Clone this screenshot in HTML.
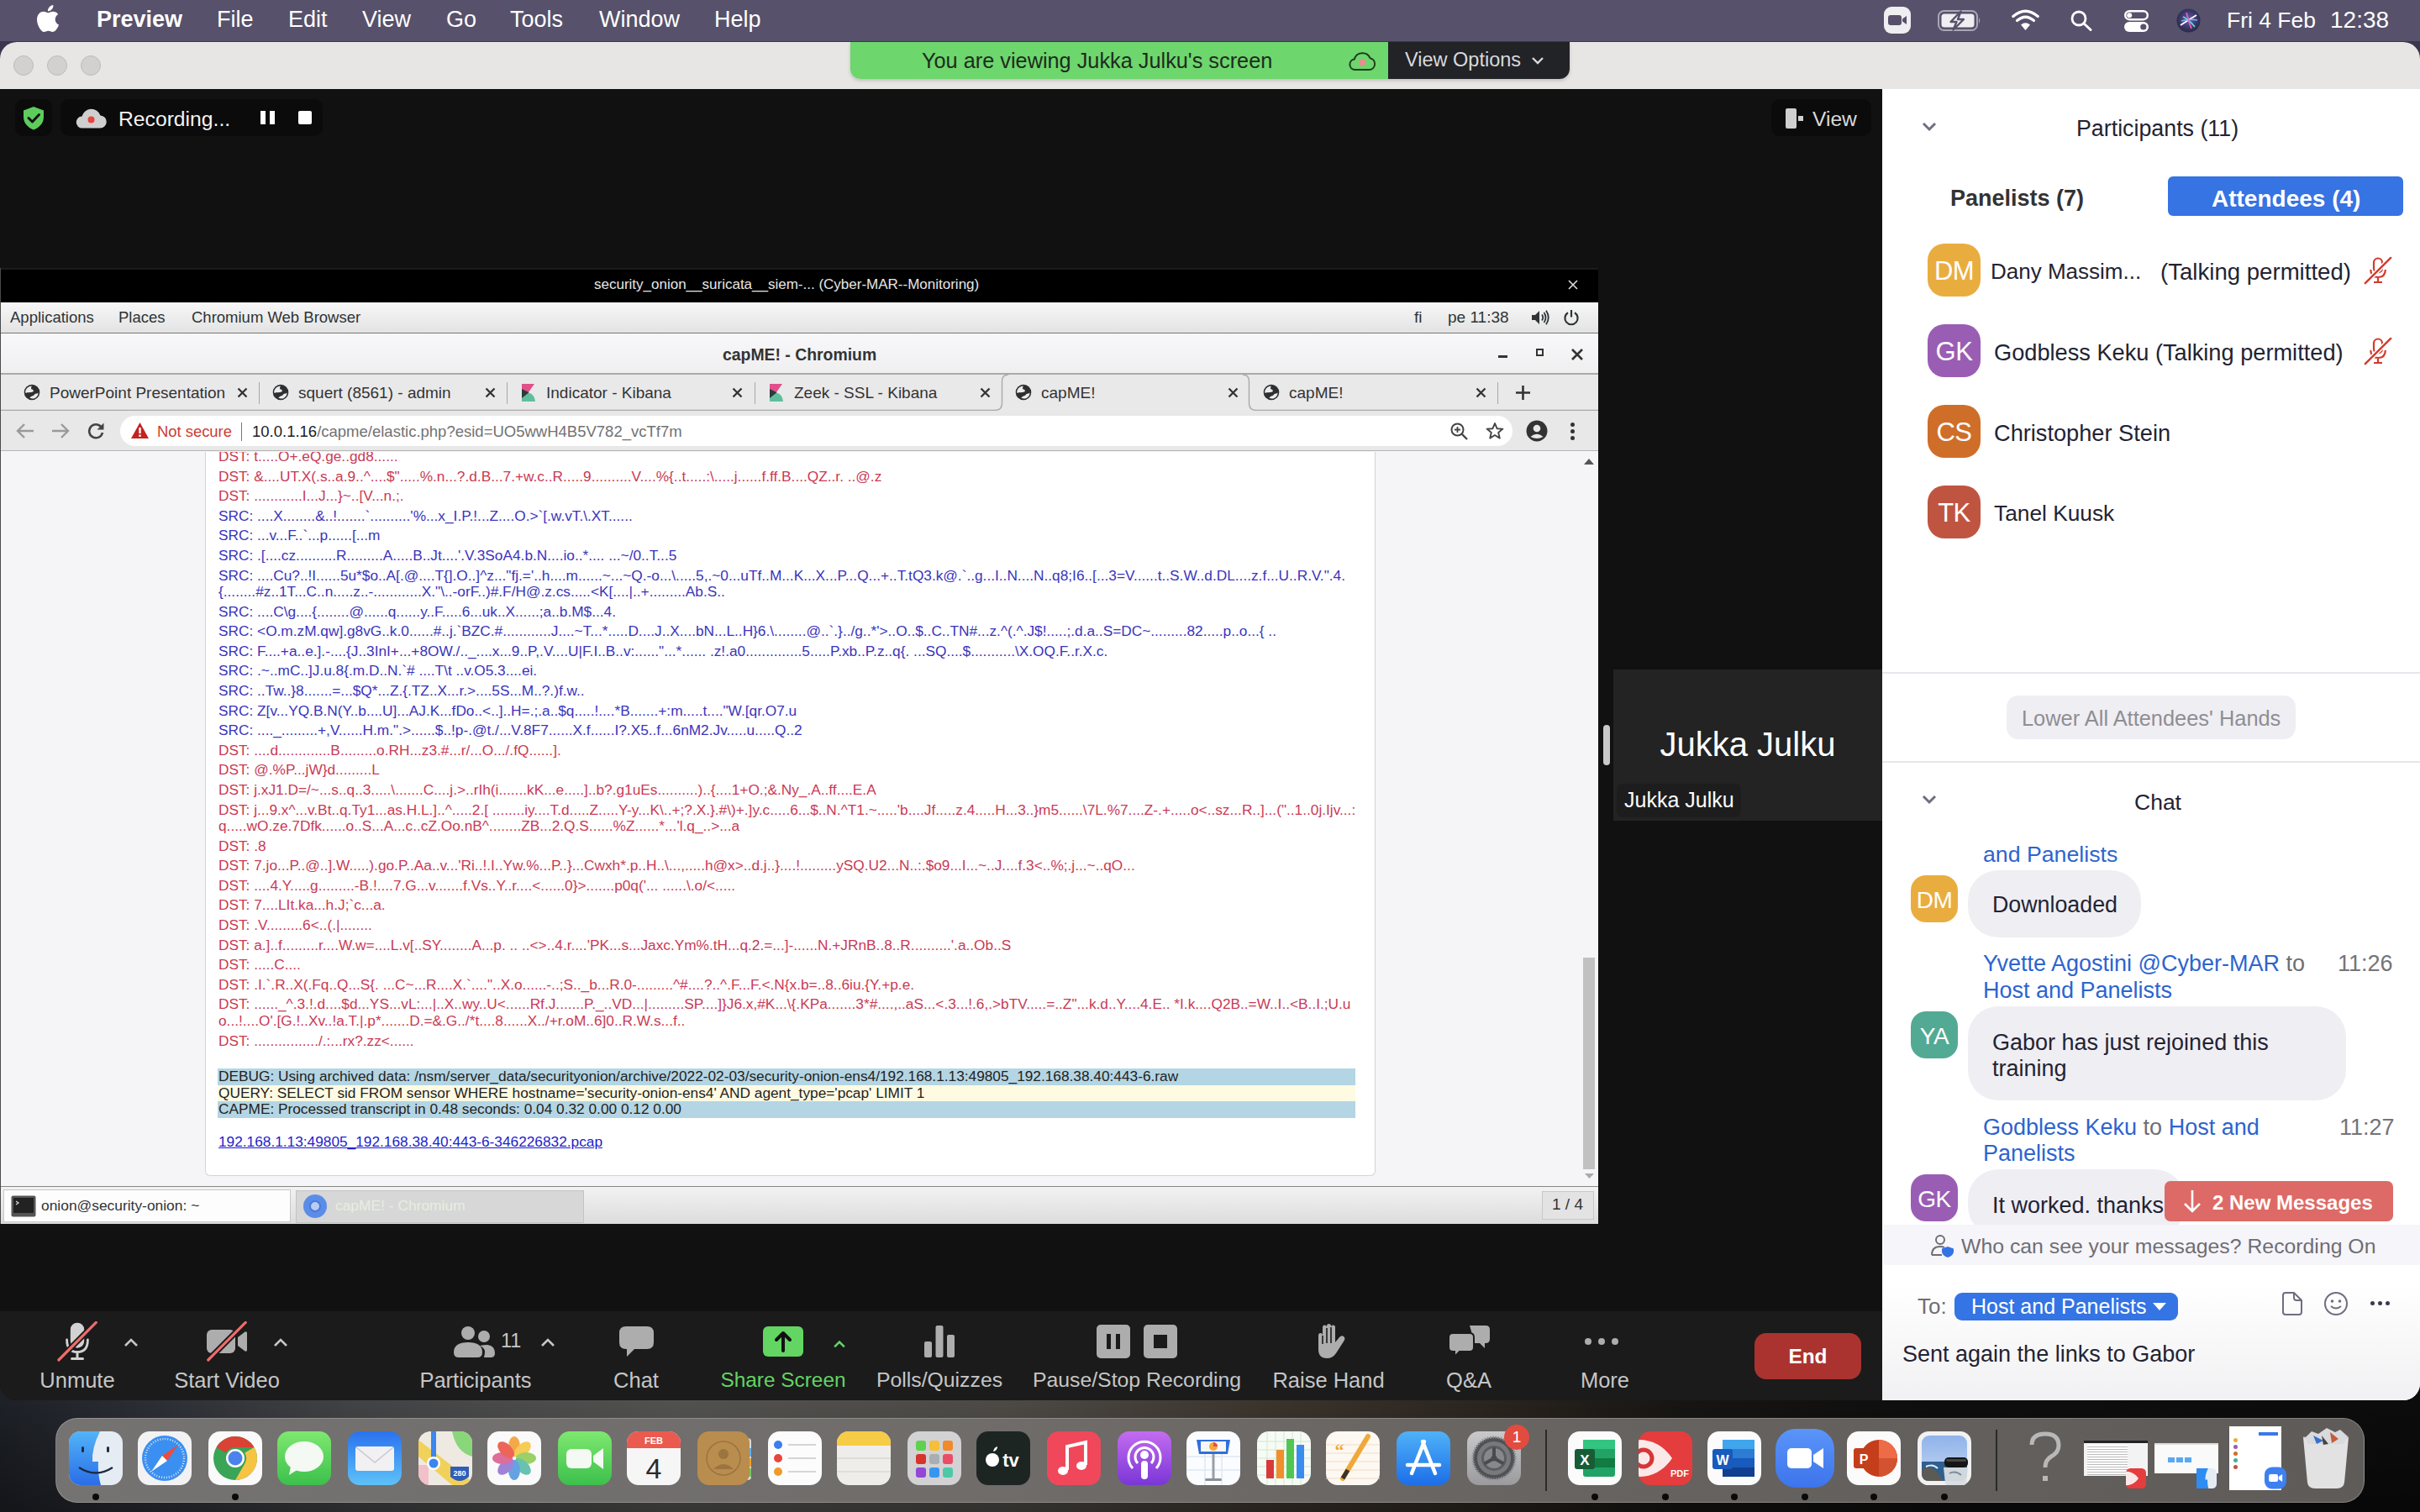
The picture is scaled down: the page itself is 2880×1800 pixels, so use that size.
<!DOCTYPE html>
<html><head><meta charset="utf-8">
<style>
*{margin:0;padding:0;box-sizing:border-box}
html,body{width:2880px;height:1800px;overflow:hidden}
body{position:relative;background:#141414;font-family:"Liberation Sans",sans-serif;color:#000}
.a{position:absolute}
.nw{white-space:nowrap}
/* wallpaper */
#wall{left:0;top:0;width:2880px;height:1800px;background:
linear-gradient(180deg,rgba(0,0,0,0) 0,rgba(0,0,0,0) 1667px,rgba(0,0,0,.0) 1667px,rgba(0,0,0,.35) 1800px),
linear-gradient(180deg,#3a3650 0,#3a3650 110px,rgba(0,0,0,0) 110px),linear-gradient(90deg,#1d2026 0px,#2b2e35 180px,#424345 420px,#525250 800px,#4d4a46 1200px,#3c352e 1500px,#2c2620 1750px,#171513 2000px,#0e0e0e 2300px,#0c0c0c 2880px)}
/* menubar */
#menubar{left:0;top:0;width:2880px;height:49px;background:#57516b;color:#fff;font-size:27px}
#menubar span{position:absolute;top:8px}
/* zoom window */
#zwin{left:0;top:50px;width:2880px;height:1617px;border-radius:20px;overflow:hidden;background:#111}
#ztitle{left:0;top:0;width:2880px;height:56px;background:#e8e6e5}
.tl{position:absolute;top:16px;width:24px;height:24px;border-radius:50%;background:#d3d1cf;border:1px solid #bdbbb9}
#stage{left:0;top:56px;width:2240px;height:1455px;background:#111111}
#toolbar{left:0;top:1511px;width:2240px;height:106px;background:#1b1b1b}
#panel{left:2240px;top:56px;width:640px;height:1561px;background:#fff}
#txt div{font-size:17.27px;line-height:19.5px;margin-bottom:4.1px;white-space:nowrap}
#txt .d{color:#c93a55}
#txt .s{color:#3a34bc}
.dbg{font-size:17.27px;line-height:19.5px;color:#222}
.tabt2{top:138px;font-size:19px;color:#333}
.pt{color:#232333;line-height:normal;margin-top:2px}
.bl{color:#2d64cf}
.av{width:63px;height:63px;border-radius:20px;color:#fff;font-size:31px;line-height:66px;text-align:center;letter-spacing:-.5px}
.av2{width:56px;height:56px;border-radius:18px;color:#fff;font-size:28px;line-height:59px;text-align:center;letter-spacing:-.5px}
.bub{background:#efeef3;border-radius:36px}
.tb{top:1629px;text-align:center;font-size:25.5px;color:#c6c6c6}
.di{top:1704px;width:64px;height:64px}
.dot{top:1778px;width:8px;height:8px;border-radius:50%;background:#0a0a0a}
.tabx2{top:136px;font-size:19px;color:#333;font-weight:bold}
</style></head>
<body>
<div id="wall" class="a"></div>

<div id="menubar" class="a">
  <svg class="a" style="left:44px;top:6px" width="26" height="32" viewBox="0 0 814 1000"><path fill="#fff" d="M788.1 340.9c-5.8 4.5-108.2 62.2-108.2 190.5 0 148.4 130.3 200.9 134.2 202.2-.6 3.2-20.7 71.9-68.7 141.9-42.8 61.6-87.5 123.1-155.5 123.1s-85.5-39.5-164-39.5c-76.5 0-103.7 40.8-165.9 40.8s-105.6-57-155.5-127C46.7 790.7 0 663 0 541.8c0-194.4 126.4-297.5 250.8-297.5 66.1 0 121.2 43.4 162.7 43.4 39.5 0 101.1-46 176.3-46 28.5 0 130.9 2.6 198.3 99.2zm-234-181.5c31.1-36.9 53.1-88.1 53.1-139.3 0-7.1-.6-14.3-1.9-20.1-50.6 1.9-110.8 33.7-147.1 75.8-28.5 32.4-55.1 83.6-55.1 135.5 0 7.8 1.3 15.6 1.9 18.1 3.2.6 8.4 1.3 13.6 1.3 45.4 0 102.5-30.4 135.5-71.3z"/></svg>
  <span style="left:115px;font-weight:bold;font-size:27px">Preview</span>
  <span style="left:258px">File</span>
  <span style="left:343px">Edit</span>
  <span style="left:431px">View</span>
  <span style="left:531px">Go</span>
  <span style="left:607px">Tools</span>
  <span style="left:713px">Window</span>
  <span style="left:850px">Help</span>
  <svg class="a" style="left:2242px;top:8px" width="32" height="32" viewBox="0 0 32 32"><rect x="0" y="0" width="32" height="32" rx="9" fill="#efeef0"/><rect x="5" y="10" width="16" height="12" rx="3" fill="#57516b"/><path d="M22 14.5 L27 11 V21 L22 17.5Z" fill="#57516b"/></svg>
  <svg class="a" style="left:2306px;top:12px" width="52" height="25" viewBox="0 0 52 25"><rect x="1" y="1" width="46" height="23" rx="6.5" fill="none" stroke="#aaa6b6" stroke-width="2"/><rect x="4.5" y="4.5" width="39" height="16" rx="3.5" fill="#efeef0"/><path d="M49 9 Q51.5 12.5 49 16Z" fill="#aaa6b6"/><path d="M27.5 1.5 L15.5 14 H22.5 L18.5 23.5 L31 11 H24Z" fill="#efeef0" stroke="#57516b" stroke-width="2.4" stroke-linejoin="round"/></svg>
  <svg class="a" style="left:2394px;top:11px" width="33" height="25" viewBox="0 0 33 25"><path d="M16.5 25 L11 18.5 Q16.5 14 22 18.5Z" fill="#fff"/><path d="M6.5 13.5 Q16.5 5 26.5 13.5" stroke="#fff" stroke-width="3.2" fill="none" stroke-linecap="round"/><path d="M1.8 8.5 Q16.5 -4 31.2 8.5" stroke="#fff" stroke-width="3.2" fill="none" stroke-linecap="round"/></svg>
  <svg class="a" style="left:2464px;top:12px" width="26" height="25" viewBox="0 0 26 25"><circle cx="10" cy="10" r="8" stroke="#fff" stroke-width="2.8" fill="none"/><path d="M16 16 L24 23.5" stroke="#fff" stroke-width="3" stroke-linecap="round"/></svg>
  <svg class="a" style="left:2528px;top:12px" width="29" height="26" viewBox="0 0 29 26"><rect x="1.2" y="1.2" width="26.6" height="10" rx="5" fill="none" stroke="#fff" stroke-width="2.4"/><circle cx="6.2" cy="6.2" r="3" fill="#fff"/><rect x="0" y="14" width="29" height="12" rx="6" fill="#fff"/><circle cx="22.8" cy="20" r="3.6" fill="#57516b"/></svg>
  <svg class="a" style="left:2590px;top:10px" width="29" height="29" viewBox="0 0 29 29"><defs><radialGradient id="sg" cx=".5" cy=".45" r=".55"><stop offset="0" stop-color="#6a5fa8"/><stop offset=".6" stop-color="#3b3a6e"/><stop offset="1" stop-color="#2a2a44"/></radialGradient></defs><circle cx="14.5" cy="14.5" r="14" fill="url(#sg)"/><path d="M5 20 Q14 14 24 8" stroke="#fff" stroke-width="2" fill="none"/><path d="M8 10 Q15 13 22 22" stroke="#5ee0d0" stroke-width="1.8" fill="none"/><path d="M12 5 Q14 14 18 24" stroke="#e85ac0" stroke-width="1.8" fill="none"/><path d="M6 15 Q15 12 25 14" stroke="#7ab0ff" stroke-width="1.5" fill="none"/></svg>
  <span style="left:2650px;font-size:26.5px;top:9px">Fri 4 Feb</span>
  <span style="left:2773px;font-size:28px">12:38</span>
</div>

<div id="zwin" class="a">
  <div id="ztitle" class="a">
    <div class="tl" style="left:16px"></div>
    <div class="tl" style="left:56px"></div>
    <div class="tl" style="left:96px"></div>
    <div class="a" style="left:1012px;top:0;width:856px;height:44px;border-radius:0 0 12px 12px;overflow:hidden;box-shadow:0 2px 4px rgba(0,0,0,.18)">
      <div class="a" style="left:0;top:0;width:640px;height:44px;background:#6dd66c"></div>
      <div class="a" style="left:640px;top:0;width:216px;height:44px;background:#222326"></div>
      <div class="a nw" style="left:85px;top:8px;font-size:25.3px;color:#1f2a1f">You are viewing Jukka Julku's screen</div>
      <svg class="a" style="left:592px;top:10px" width="34" height="26" viewBox="0 0 34 26"><path d="M8 23 H26 A7 7 0 0 0 26.5 9.2 A10 10 0 0 0 7.8 10.5 A6.3 6.3 0 0 0 8 23Z" fill="none" stroke="#1f3b1f" stroke-width="2"/><circle cx="17" cy="14.5" r="4" fill="#e98c94"/></svg>
      <div class="a nw" style="left:660px;top:8px;font-size:23.5px;color:#d9d9dc">View Options</div>
      <svg class="a" style="left:810px;top:16px" width="16" height="12" viewBox="0 0 16 12"><path d="M2 3 L8 9 L14 3" stroke="#d9d9dc" stroke-width="2.4" fill="none"/></svg>
    </div>
  </div>
  <div id="stage" class="a">
    <div class="a" style="left:18px;top:12px;width:44px;height:44px;border-radius:10px;background:#0b0b0b"></div>
    <svg class="a" style="left:27px;top:20px" width="26" height="29" viewBox="0 0 26 29"><path d="M13 1 L25 5.5 V13 C25 21 19.5 26 13 28.5 C6.5 26 1 21 1 13 V5.5Z" fill="#5dcc5d"/><path d="M7 14.5 L11.5 19 L19.5 10.5" stroke="#111" stroke-width="3" fill="none" stroke-linecap="round" stroke-linejoin="round"/></svg>
    <div class="a" style="left:72px;top:12px;width:312px;height:44px;border-radius:10px;background:#0b0b0b"></div>
    <svg class="a" style="left:90px;top:21px" width="37" height="26" viewBox="0 0 37 26"><path d="M8 25.5 H29 A7.5 7.5 0 0 0 29.5 10.5 A11.5 11.5 0 0 0 7.5 11.5 A7 7 0 0 0 8 25.5Z" fill="#cfcfcf"/><circle cx="18.5" cy="15.5" r="4" fill="#e8453c"/></svg>
    <div class="a nw" style="left:141px;top:22px;font-size:24.7px;color:#f4f4f4">Recording...</div>
    <div class="a" style="left:310px;top:26px;width:6px;height:16px;background:#fff"></div>
    <div class="a" style="left:321px;top:26px;width:6px;height:16px;background:#fff"></div>
    <div class="a" style="left:355px;top:26px;width:16px;height:16px;border-radius:2px;background:#fff"></div>
    <div class="a" style="left:2108px;top:12px;width:119px;height:44px;border-radius:10px;background:#0b0b0b"></div>
    <svg class="a" style="left:2125px;top:23px" width="24" height="24" viewBox="0 0 24 24"><rect x="0" y="0" width="13" height="24" rx="2" fill="#cfcfcf"/><rect x="15" y="9" width="6" height="6" fill="#cfcfcf"/></svg>
    <div class="a nw" style="left:2157px;top:22px;font-size:24.6px;color:#dadada">View</div>
  </div>
  <div id="toolbar" class="a"></div>
  <div id="panel" class="a"></div>
</div>

<svg width="0" height="0" style="position:absolute">
  <defs>
    <symbol id="globe" viewBox="0 0 20 20"><circle cx="10" cy="10" r="9.3" fill="#2e2f31"/><path d="M2.6 7.5 Q4.5 3 9.8 2.4 Q8.6 4.6 9.4 6.2 Q12.6 6.9 11.6 9.2 Q8.6 10.6 4.2 10.2 Q2.9 11.2 2.2 10.2 Q2.1 8.8 2.6 7.5Z" fill="#ececec"/><path d="M7.2 16.6 Q9.5 14.2 12.2 13.8 Q12.8 12.4 14.2 11.8 Q16.3 11.8 17.6 10.6 Q17.4 15.6 12.5 17.4 Q9.6 17.9 7.2 16.6Z" fill="#ececec"/></symbol>
    <symbol id="kib" viewBox="0 0 16 21"><path d="M0 0 H15 L8 10 L0 10Z" fill="#e0508a"/><path d="M0 21 H16 Q15 12 8 10.5 L0 15Z" fill="#5fbf9c"/><path d="M0 6 L8.5 10.2 L0 17Z" fill="#2f3a3a"/></symbol>
  </defs>
</svg>
<div class="a" id="lx" style="left:0;top:319px;width:1902px;height:1138px;overflow:hidden;background:#f5f4f7">
  <!-- top black bar -->
  <div class="a" style="left:0;top:0;width:1902px;height:41px;background:#000;border-top:2px solid #1c1c1c"></div>
  <div class="a nw" style="left:707px;top:10px;font-size:17px;color:#e6e6e6">security_onion__suricata__siem-... (Cyber-MAR--Monitoring)</div>
  <svg class="a" style="left:1864px;top:12px" width="16" height="16" viewBox="0 0 16 16"><path d="M3 3 L13 13 M13 3 L3 13" stroke="#ddd" stroke-width="1.6"/></svg>
  <!-- gnome panel -->
  <div class="a" style="left:0;top:41px;width:1902px;height:37px;background:linear-gradient(#f7f7f7,#e3e3e3);border-bottom:1px solid #777"></div>
  <div class="a nw" style="left:12px;top:48px;font-size:18.5px;color:#2e3436">Applications</div>
  <div class="a nw" style="left:141px;top:48px;font-size:18.5px;color:#2e3436">Places</div>
  <div class="a nw" style="left:228px;top:48px;font-size:18.5px;color:#2e3436">Chromium Web Browser</div>
  <div class="a nw" style="left:1683px;top:48px;font-size:19px;color:#2e3436">fi</div>
  <div class="a nw" style="left:1723px;top:48px;font-size:19px;color:#2e3436">pe 11:38</div>
  <svg class="a" style="left:1822px;top:49px" width="22" height="20" viewBox="0 0 22 20"><path d="M1 7 H5 L10 2 V18 L5 13 H1Z" fill="#2e3436"/><path d="M13 6.5 Q15.5 10 13 13.5 M15.5 4 Q19.5 10 15.5 16 M18 1.8 Q23.5 10 18 18.2" stroke="#2e3436" stroke-width="1.8" fill="none"/></svg>
  <svg class="a" style="left:1860px;top:49px" width="20" height="20" viewBox="0 0 20 20"><path d="M6 4.2 A7.6 7.6 0 1 0 14 4.2" stroke="#2e3436" stroke-width="2.2" fill="none"/><path d="M10 1 V9.5" stroke="#2e3436" stroke-width="2.2"/></svg>
  <!-- chromium title -->
  <div class="a" style="left:0;top:78px;width:1902px;height:48px;background:linear-gradient(#f8f7f9,#efeff0)"></div>
  <div class="a nw" style="left:860px;top:92px;font-size:19.4px;font-weight:bold;color:#333">capME! - Chromium</div>
  <div class="a" style="left:1783px;top:104px;width:11px;height:3px;background:#333"></div>
  <div class="a" style="left:1828px;top:96px;width:9px;height:9px;border:2.5px solid #333"></div>
  <svg class="a" style="left:1869px;top:95px" width="16" height="16" viewBox="0 0 16 16"><path d="M2 2 L14 14 M14 2 L2 14" stroke="#333" stroke-width="2.6"/></svg>
  <!-- tab strip -->
  <div class="a" style="left:0;top:125px;width:1902px;height:45px;background:#e9e9ea;border-top:2px solid #aaaaaa"></div>
  <svg class="a" style="left:0;top:126px" width="1902" height="45" viewBox="0 0 1902 45"><path d="M0 43.5 H1184 Q1192.5 43.5 1192.5 35 V9 Q1192.5 1 1200 1" stroke="#a9a9a9" stroke-width="1.4" fill="none"/><path d="M1479 1 Q1486.5 1 1486.5 9 V35 Q1486.5 43.5 1495 43.5 H1902" stroke="#a9a9a9" stroke-width="1.4" fill="none"/></svg>
  <svg class="a" style="left:28px;top:138px" width="20" height="20"><use href="#globe"/></svg>
  <div class="a nw tabt2" style="left:59px">PowerPoint Presentation</div>
  <svg class="a" style="left:282px;top:142px" width="13" height="13" viewBox="0 0 13 13"><path d="M1.5 1.5 L11.5 11.5 M11.5 1.5 L1.5 11.5" stroke="#333" stroke-width="2.3"/></svg>
  <div class="a" style="left:308px;top:136px;width:1px;height:26px;background:#a8a8a8"></div>
  <svg class="a" style="left:324px;top:138px" width="20" height="20"><use href="#globe"/></svg>
  <div class="a nw tabt2" style="left:355px">squert (8561) - admin</div>
  <svg class="a" style="left:577px;top:142px" width="13" height="13" viewBox="0 0 13 13"><path d="M1.5 1.5 L11.5 11.5 M11.5 1.5 L1.5 11.5" stroke="#333" stroke-width="2.3"/></svg>
  <div class="a" style="left:603px;top:136px;width:1px;height:26px;background:#a8a8a8"></div>
  <svg class="a" style="left:621px;top:138px" width="16" height="21"><use href="#kib"/></svg>
  <div class="a nw tabt2" style="left:650px">Indicator - Kibana</div>
  <svg class="a" style="left:871px;top:142px" width="13" height="13" viewBox="0 0 13 13"><path d="M1.5 1.5 L11.5 11.5 M11.5 1.5 L1.5 11.5" stroke="#333" stroke-width="2.3"/></svg>
  <div class="a" style="left:898px;top:136px;width:1px;height:26px;background:#a8a8a8"></div>
  <svg class="a" style="left:916px;top:138px" width="16" height="21"><use href="#kib"/></svg>
  <div class="a nw tabt2" style="left:945px">Zeek - SSL - Kibana</div>
  <svg class="a" style="left:1166px;top:142px" width="13" height="13" viewBox="0 0 13 13"><path d="M1.5 1.5 L11.5 11.5 M11.5 1.5 L1.5 11.5" stroke="#333" stroke-width="2.3"/></svg>
  <svg class="a" style="left:1208px;top:138px" width="20" height="20"><use href="#globe"/></svg>
  <div class="a nw tabt2" style="left:1239px">capME!</div>
  <svg class="a" style="left:1461px;top:142px" width="13" height="13" viewBox="0 0 13 13"><path d="M1.5 1.5 L11.5 11.5 M11.5 1.5 L1.5 11.5" stroke="#333" stroke-width="2.3"/></svg>
  <svg class="a" style="left:1503px;top:138px" width="20" height="20"><use href="#globe"/></svg>
  <div class="a nw tabt2" style="left:1534px">capME!</div>
  <svg class="a" style="left:1756px;top:142px" width="13" height="13" viewBox="0 0 13 13"><path d="M1.5 1.5 L11.5 11.5 M11.5 1.5 L1.5 11.5" stroke="#333" stroke-width="2.3"/></svg>
  <div class="a" style="left:1782px;top:136px;width:1px;height:26px;background:#a8a8a8"></div>
  <svg class="a" style="left:1804px;top:140px" width="17" height="17" viewBox="0 0 17 17"><path d="M8.5 0 V17 M0 8.5 H17" stroke="#333" stroke-width="2.6"/></svg>
  <!-- toolbar -->
  <div class="a" style="left:0;top:170px;width:1902px;height:48px;background:#e8e8e8;border-bottom:1px solid #b5b5b5"></div>
  <svg class="a" style="left:19px;top:184px" width="22" height="20" viewBox="0 0 22 20"><path d="M21 10 H3 M10 2 L2 10 L10 18" stroke="#9a9a9a" stroke-width="2.4" fill="none"/></svg>
  <svg class="a" style="left:61px;top:184px" width="22" height="20" viewBox="0 0 22 20"><path d="M1 10 H19 M12 2 L20 10 L12 18" stroke="#9a9a9a" stroke-width="2.4" fill="none"/></svg>
  <svg class="a" style="left:103px;top:183px" width="22" height="22" viewBox="0 0 22 22"><path d="M18.5 8 A8 8 0 1 0 19 13" stroke="#444" stroke-width="2.6" fill="none"/><path d="M20.5 1.5 V9.5 H12.5Z" fill="#444"/></svg>
  <div class="a" style="left:143px;top:176px;width:1657px;height:36px;border-radius:18px;background:#fff"></div>
  <svg class="a" style="left:156px;top:184px" width="21" height="19" viewBox="0 0 21 19"><path d="M10.5 0 L21 19 H0Z" fill="#c5221f"/><rect x="9.3" y="6" width="2.4" height="7" fill="#fff"/><rect x="9.3" y="14.5" width="2.4" height="2.4" fill="#fff"/></svg>
  <div class="a nw" style="left:187px;top:184px;font-size:18.4px;color:#cc3b34">Not secure</div>
  <div class="a" style="left:287px;top:184px;width:1px;height:22px;background:#777"></div>
  <div class="a nw" style="left:300px;top:184px;font-size:18.5px;color:#727272"><span style="color:#202124">10.0.1.16</span>/capme/elastic.php?esid=UO5wwH4B5V782_vcTf7m</div>
  <svg class="a" style="left:1726px;top:184px" width="22" height="22" viewBox="0 0 22 22"><circle cx="8.5" cy="8.5" r="7" stroke="#444" stroke-width="2" fill="none"/><path d="M13.5 13.5 L20 20" stroke="#444" stroke-width="2.4"/><path d="M8.5 5 V12 M5 8.5 H12" stroke="#444" stroke-width="1.8"/></svg>
  <svg class="a" style="left:1768px;top:183px" width="22" height="22" viewBox="0 0 22 22"><path d="M11 2 L13.6 8.2 L20.4 8.6 L15.2 13 L16.8 19.6 L11 16 L5.2 19.6 L6.8 13 L1.6 8.6 L8.4 8.2Z" stroke="#444" stroke-width="1.9" fill="none" stroke-linejoin="round"/></svg>
  <svg class="a" style="left:1816px;top:181px" width="26" height="26" viewBox="0 0 26 26"><circle cx="13" cy="13" r="12.5" fill="#333"/><circle cx="13" cy="10" r="4.3" fill="#e8e8e8"/><path d="M5.5 20 Q13 13.5 20.5 20 Q13 24 5.5 20Z" fill="#e8e8e8"/></svg>
  <div class="a" style="left:1869px;top:184px;width:5px;height:5px;border-radius:50%;background:#333"></div>
  <div class="a" style="left:1869px;top:192px;width:5px;height:5px;border-radius:50%;background:#333"></div>
  <div class="a" style="left:1869px;top:200px;width:5px;height:5px;border-radius:50%;background:#333"></div>
  <!-- content -->
  <div class="a" style="left:244px;top:219px;width:1393px;height:862px;background:#fff;border:1px solid #d4d4d4;border-top:none;border-radius:0 0 6px 6px"></div>
  <div class="a" style="left:245px;top:219px;width:1390px;height:1000px;overflow:hidden">
  <div class="a" id="txt" style="left:15px;top:-4px;width:1370px">
<div class="d">DST: t.....O+.eQ.ge..gd8......</div>
<div class="d">DST: &....UT.X(.s..a.9..^....$".....%.n...?.d.B...7.+w.c..R.....9..........V....%{..t.....:\.....j......f.ff.B....QZ..r. ..@.z</div>
<div class="d">DST: ............I...J...}~..[V...n.;.</div>
<div class="s">SRC: ....X........&..!.......`..........'%...x_I.P.!...Z....O.>`[.w.vT.\.XT......</div>
<div class="s">SRC: ...v...F..`...p......[...m</div>
<div class="s">SRC: .[....cz..........R.........A.....B..Jt....'.V.3SoA4.b.N....io..*.... ...~/0..T...5</div>
<div class="s">SRC: ....Cu?..!I......5u*$o..A[.@....T{].O..]^z..."fj.='..h....m......~...~Q.-o...\.....5,.~0...uTf..M...K...X...P...Q...+..T.tQ3.k@.`..g...I..N....N..q8;I6..[...3=V......t..S.W..d.DL....z.f...U..R.V.".4.<br>{........#z..1T...C..n.....z..-............X."\..-orF..)#.F/H@.z.cs.....&lt;K[....|..+.........Ab.S..</div>
<div class="s">SRC: ....C\g....{........@......q......y..F.....6...uk..X......;a..b.M$...4.</div>
<div class="s">SRC: &lt;O.m.zM.qw].g8vG..k.0......#..j.`BZC.#............J....~T...*.....D....J..X....bN...L..H}6.\........@..`.}../g..*'&gt;..O..$..C..TN#...z.^(.^.J$!.....;.d.a..S=DC~.........82.....p..o...{ ..</div>
<div class="s">SRC: F....+a..e.].-....{J..3InI+...+8OW./.._....x...9..P,.V....U|F.I..B..v:......"...*...... .z!.a0..............5.....P.xb..P.z..q{. ...SQ....$...........\X.OQ.F..r.X.c.</div>
<div class="s">SRC: .~..mC..]J.u.8{.m.D..N.`# ....T\t ..v.O5.3....ei.</div>
<div class="s">SRC: ..Tw..}8.......=...$Q*...Z.{.TZ..X...r.&gt;....5S...M..?.)f.w..</div>
<div class="s">SRC: Z[v...YQ.B.N(Y..b....U]...AJ.K...fDo..&lt;..]..H=.;.a..$q.....!....*B.......+:m.....t...."W.[qr.O7.u</div>
<div class="s">SRC: ...._.........+,V......H.m.".&gt;......$..!p-.@t./...V.8F7......X.f......I?.X5..f...6nM2.Jv.....u.....Q..2</div>
<div class="d">DST: ....d.............B.........o.RH...z3.#...r/...O.../.fQ......].</div>
<div class="d">DST: @.%P...jW}d.........L</div>
<div class="d">DST: j.xJ1.D=/~...s..q..3.....\.......C....j.&gt;..rIh(i.......kK...e.....]..b?.g1uEs..........)..{....1+O.;&amp;.Ny_.A..ff....E.A</div>
<div class="d">DST: j...9.x^...v.Bt..q.Ty1...as.H.L.]..^.....2.[ ........iy....T.d.....Z.....Y-y...K\..+;?.X.}.#\)+.]y.c.....6...$..N.^T1.~.....'b....Jf.....z.4.....H...3..}m5......\7L.%7....Z-.+.....o&lt;..sz...R..]...("..1..0j.Ijv...:<br>q.....wO.ze.7Dfk......o..S...A...c..cZ.Oo.nB^........ZB...2.Q.S......%Z......*...'l.q_..&gt;...a</div>
<div class="d">DST: .8</div>
<div class="d">DST: 7.jo...P..@..].W.....).go.P..Aa..v...'Ri..!.I..Yw.%...P..}...Cwxh*.p..H..\...,.....h@x&gt;..d.j..}....!.........ySQ.U2...N..:.$o9...I...~..J....f.3&lt;..%;.j...~..qO...</div>
<div class="d">DST: ....4.Y.....g.........-B.!....7.G...v.......f.Vs..Y..r....&lt;......0}&gt;.......p0q('... ......\.o/&lt;.....</div>
<div class="d">DST: 7....LIt.ka...h.J;`c...a.</div>
<div class="d">DST: .V.........6&lt;..(.|........</div>
<div class="d">DST: a.]..f.........r....W.w=....L.v[..SY........A...p. .. ..&lt;&gt;..4.r....'PK...s...Jaxc.Ym%.tH...q.2.=...]-......N.+JRnB..8..R..........'.a..Ob..S</div>
<div class="d">DST: .....C....</div>
<div class="d">DST: .I.`.R..X(.Fq..Q...S{. ...C~...R....X.`...."..X.o......-..;S.._b...R.0-.........^#....?..^.F...F.&lt;.N{x.b=..8..6iu.{Y.+p.e.</div>
<div class="d">DST: ......_^.3.!.d....$d...YS...vL:...|..X..wy..U&lt;......Rf.J.......P._..VD...|.........SP....]}J6.x,#K...\{.KPa.......3*#....,..aS...&lt;.3...!.6,.&gt;bTV.....=..Z"...k.d..Y....4.E.. *I.k....Q2B..=W..I..&lt;B..I.;U.u<br>o...!....O'.[G.!..Xv..!a.T.|.p*.......D.=&amp;.G../*t....8......X../+r.oM..6]0..R.W.s...f..</div>
<div class="d">DST: ................/.:...rx?.zz&lt;......</div>
  </div></div>
  <div class="a" style="left:259px;top:953px;width:1354px;height:59px;background:#b4d5e3"></div>
  <div class="a" style="left:259px;top:973px;width:1354px;height:19px;background:#fffbe3"></div>
  <div class="a nw dbg" style="left:260px;top:953px">DEBUG: Using archived data: /nsm/server_data/securityonion/archive/2022-02-03/security-onion-ens4/192.168.1.13:49805_192.168.38.40:443-6.raw<br>QUERY: SELECT sid FROM sensor WHERE hostname='security-onion-ens4' AND agent_type='pcap' LIMIT 1<br>CAPME: Processed transcript in 0.48 seconds: 0.04 0.32 0.00 0.12 0.00</div>
  <div class="a nw dbg" style="left:260px;top:1031px;color:#1e1ecb;text-decoration:underline">192.168.1.13:49805_192.168.38.40:443-6-346226832.pcap</div>
  <!-- scrollbar -->
  <svg class="a" style="left:1885px;top:226px" width="12" height="8" viewBox="0 0 12 8"><path d="M0 8 L6 1 L12 8Z" fill="#555"/></svg>
  <div class="a" style="left:1884px;top:821px;width:14px;height:252px;background:#c1c1c1"></div>
  <svg class="a" style="left:1886px;top:1078px" width="11" height="7" viewBox="0 0 11 7"><path d="M0 0 L5.5 6 L11 0Z" fill="#aaa"/></svg>
  <!-- taskbar -->
  <div class="a" style="left:0;top:1093px;width:1902px;height:45px;background:linear-gradient(#f2f2f2,#dcdcdc);border-top:1px solid #888"></div>
  <div class="a" style="left:4px;top:1097px;width:342px;height:39px;background:#fdfdfd;border:1px solid #c9c9c9"></div>
  <svg class="a" style="left:13px;top:1104px" width="30" height="26" viewBox="0 0 30 26"><rect x="0.5" y="0.5" width="29" height="25" rx="2" fill="#555"/><rect x="3" y="3" width="24" height="18" fill="#222"/><path d="M6 7 L9 9 L6 11" stroke="#ddd" stroke-width="1.2" fill="none"/></svg>
  <div class="a nw" style="left:49px;top:1106px;font-size:17.4px;color:#2e3436">onion@security-onion: ~</div>
  <div class="a" style="left:352px;top:1098px;width:343px;height:39px;background:#d7d7d7;border:1px solid #c3c3c3"></div>
  <div class="a" style="left:361px;top:1103px;width:28px;height:28px;border-radius:50%;background:#5b8de8"></div>
  <div class="a" style="left:368px;top:1110px;width:14px;height:14px;border-radius:50%;background:#b9cdf3;border:2px solid #4a7bd8"></div>
  <div class="a nw" style="left:399px;top:1106px;font-size:17.4px;color:#e8eee0">capME! - Chromium</div>
  <div class="a" style="left:0;top:0;width:1px;height:1138px;background:#4a4a4a"></div>
  <div class="a" style="left:1835px;top:1099px;width:62px;height:34px;background:#e3e3e3;border:1px solid #c8c8c8"></div>
  <div class="a nw" style="left:1847px;top:1104px;font-size:19px;color:#333">1 / 4</div>
</div>

<!-- ===== right panel ===== -->
<div class="a" id="pnl" style="left:2240px;top:106px;width:640px;height:1561px;overflow:hidden;border-radius:0 0 20px 0">
<div class="a" style="left:0;top:1420px;width:640px;height:141px;background:linear-gradient(#fff,#f1f1f3)"></div>
</div>
<svg class="a" style="left:2287px;top:145px" width="18" height="12" viewBox="0 0 18 12"><path d="M2 2 L9 9 L16 2" stroke="#6e6e80" stroke-width="3" fill="none"/></svg>
<div class="a nw pt" style="left:2471px;top:136px;font-size:26.8px">Participants (11)</div>
<div class="a nw pt" style="left:2321px;top:219px;font-size:27px;font-weight:bold;color:#333">Panelists (7)</div>
<div class="a" style="left:2580px;top:210px;width:280px;height:47px;border-radius:6px;background:#3673e3"></div>
<div class="a nw pt" style="left:2632px;top:219px;font-size:28px;font-weight:bold;color:#fff">Attendees (4)</div>

<div class="a av" style="left:2294px;top:290px;background:#e9ad3f">DM</div>
<div class="a nw pt" style="left:2369px;top:306px;font-size:26px">Dany Massim...</div>
<div class="a nw pt" style="left:2571px;top:306px;font-size:27.6px">(Talking permitted)</div>
<svg class="a" style="left:2812px;top:304px" width="36" height="36" viewBox="0 0 36 36"><use href="#micoff"/></svg>
<div class="a av" style="left:2294px;top:386px;background:#9a5db4">GK</div>
<div class="a nw pt" style="left:2373px;top:402px;font-size:27.2px">Godbless Keku (Talking permitted)</div>
<svg class="a" style="left:2812px;top:400px" width="36" height="36" viewBox="0 0 36 36"><use href="#micoff"/></svg>
<div class="a av" style="left:2294px;top:482px;background:#cf6e29">CS</div>
<div class="a nw pt" style="left:2373px;top:498px;font-size:27.2px">Christopher Stein</div>
<div class="a av" style="left:2294px;top:578px;background:#bf5541">TK</div>
<div class="a nw pt" style="left:2373px;top:594px;font-size:26.3px">Tanel Kuusk</div>

<div class="a" style="left:2240px;top:800px;width:640px;height:2px;background:#e6e6ec"></div>
<div class="a" style="left:2388px;top:828px;width:344px;height:52px;border-radius:14px;background:#efeef3"></div>
<div class="a nw pt" style="left:2406px;top:839px;font-size:25.4px;color:#8e8e93">Lower All Attendees' Hands</div>
<div class="a" style="left:2240px;top:906px;width:640px;height:2px;background:#e6e6ec"></div>

<svg class="a" style="left:2287px;top:946px" width="18" height="12" viewBox="0 0 18 12"><path d="M2 2 L9 9 L16 2" stroke="#6e6e80" stroke-width="3" fill="none"/></svg>
<div class="a nw pt" style="left:2540px;top:938px;font-size:26.5px">Chat</div>

<div class="a" style="left:2240px;top:980px;width:640px;height:478px;overflow:hidden">
  <div class="a nw pt bl" style="left:120px;top:20px;font-size:26.7px">and Panelists</div>
  <div class="a av2" style="left:34px;top:62px;background:#e9ad3f">DM</div>
  <div class="a bub" style="left:102px;top:56px;width:206px;height:80px"></div>
  <div class="a nw pt" style="left:131px;top:80px;font-size:26.8px">Downloaded</div>
  <div class="a nw pt bl" style="left:120px;top:150px;font-size:27px">Yvette Agostini @Cyber-MAR <span style="color:#6e6e73">to</span></div>
  <div class="a nw pt" style="left:542px;top:150px;font-size:27px;color:#747478">11:26</div>
  <div class="a nw pt bl" style="left:120px;top:182px;font-size:27px">Host and Panelists</div>
  <div class="a av2" style="left:34px;top:224px;background:#52aa94">YA</div>
  <div class="a bub" style="left:102px;top:218px;width:450px;height:112px"></div>
  <div class="a pt" style="left:131px;top:244px;font-size:27px;line-height:30.5px;width:400px">Gabor has just rejoined this training</div>
  <div class="a nw pt bl" style="left:120px;top:345px;font-size:27px">Godbless Keku <span style="color:#6e6e73">to</span> Host and</div>
  <div class="a nw pt" style="left:544px;top:345px;font-size:27px;color:#747478">11:27</div>
  <div class="a nw pt bl" style="left:120px;top:376px;font-size:27px">Panelists</div>
  <div class="a av2" style="left:34px;top:418px;background:#9a5db4">GK</div>
  <div class="a bub" style="left:102px;top:412px;width:258px;height:80px"></div>
  <div class="a nw pt" style="left:131px;top:438px;font-size:27px">It worked. thanks</div>
  <div class="a" style="left:336px;top:426px;width:272px;height:48px;border-radius:7px;background:#dd6a66"></div>
  <svg class="a" style="left:358px;top:435px" width="22" height="30" viewBox="0 0 22 30"><path d="M11 2 V27 M2 18 L11 27 L20 18" stroke="#fff" stroke-width="2.6" fill="none"/></svg>
  <div class="a nw pt" style="left:393px;top:436px;font-size:24px;font-weight:bold;color:#fff">2 New Messages</div>
</div>
<div class="a" style="left:2242px;top:1458px;width:638px;height:48px;background:#f6f5fa"></div>
<svg class="a" style="left:2298px;top:1469px" width="28" height="28" viewBox="0 0 28 28"><circle cx="11" cy="7" r="5" stroke="#6e6e73" stroke-width="2" fill="none"/><path d="M1 25 Q1 15 11 15 Q14 15 16 16" stroke="#6e6e73" stroke-width="2" fill="none"/><path d="M1 25 H13" stroke="#6e6e73" stroke-width="2"/><path d="M20 15 L27 17.5 V21 Q27 25.5 20 28 Q13 25.5 13 21 V17.5Z" fill="#3473e4"/></svg>
<div class="a nw pt" style="left:2334px;top:1468px;font-size:24.8px;color:#6e6e73">Who can see your messages? Recording On</div>
<div class="a nw pt" style="left:2282px;top:1538px;font-size:26px;color:#6e6e73">To:</div>
<div class="a" style="left:2326px;top:1539px;width:266px;height:33px;border-radius:9px;background:#3474e4"></div>
<div class="a nw pt" style="left:2346px;top:1539px;font-size:25px;color:#fff">Host and Panelists</div>
<svg class="a" style="left:2562px;top:1551px" width="16" height="10" viewBox="0 0 16 10"><path d="M0 0 H16 L8 9Z" fill="#fff"/></svg>
<svg class="a" style="left:2715px;top:1537px" width="26" height="30" viewBox="0 0 26 30"><path d="M2 5 Q2 2 5 2 H15 L24 11 V25 Q24 28 21 28 H5 Q2 28 2 25Z M15 2 V8 Q15 11 18 11 H24" stroke="#6e6e80" stroke-width="2" fill="none"/></svg>
<svg class="a" style="left:2765px;top:1537px" width="30" height="30" viewBox="0 0 30 30"><circle cx="15" cy="15" r="13" stroke="#6e6e80" stroke-width="2" fill="none"/><circle cx="10.5" cy="12" r="1.8" fill="#6e6e80"/><circle cx="19.5" cy="12" r="1.8" fill="#6e6e80"/><path d="M9 18 Q15 23 21 18" stroke="#6e6e80" stroke-width="2" fill="none"/></svg>
<div class="a" style="left:2821px;top:1549px;width:5px;height:5px;border-radius:50%;background:#3a3a4a"></div>
<div class="a" style="left:2830px;top:1549px;width:5px;height:5px;border-radius:50%;background:#3a3a4a"></div>
<div class="a" style="left:2839px;top:1549px;width:5px;height:5px;border-radius:50%;background:#3a3a4a"></div>
<div class="a nw pt" style="left:2264px;top:1595px;font-size:27px">Sent again the links to Gabor</div>

<!-- ===== video tile ===== -->
<div class="a" style="left:1920px;top:797px;width:320px;height:180px;background:#232323"></div>
<div class="a" style="left:1908px;top:863px;width:8px;height:48px;border-radius:4px;background:#c9c9c9"></div>
<div class="a nw" style="left:1920px;top:864px;width:320px;text-align:center;font-size:40px;color:#fff">Jukka Julku</div>
<div class="a" style="left:1924px;top:933px;width:148px;height:40px;border-radius:8px;background:#1d1d1d"></div>
<div class="a nw" style="left:1933px;top:938px;font-size:25px;color:#fff">Jukka Julku</div>

<!-- ===== toolbar ===== -->
<svg width="0" height="0" style="position:absolute"><defs>
 <symbol id="micoff" viewBox="0 0 36 36"><rect x="13" y="3.5" width="10" height="17" rx="5" stroke="#d33a2c" stroke-width="2.2" fill="none"/><path d="M9.3 17 Q9.3 26 18 26 Q26.8 26 26.8 17 M18 26 V32 M13 32 H23" stroke="#d33a2c" stroke-width="2.2" fill="none"/><path d="M2.8 33.2 L33.2 2.9" stroke="#fff" stroke-width="5.5"/><path d="M2.8 33.2 L33.2 2.9" stroke="#d33a2c" stroke-width="2.4" stroke-linecap="round"/></symbol>
 <symbol id="chev" viewBox="0 0 18 12"><path d="M2 10 L9 3 L16 10" stroke="#c6c6c6" stroke-width="2.6" fill="none"/></symbol>
</defs></svg>
<div class="a" style="left:0;top:1561px;width:2240px;height:106px;background:#1b1b1b;border-radius:0 0 0 20px"></div>
<svg class="a" style="left:68px;top:1573px" width="50" height="50" viewBox="0 0 50 50"><rect x="15.8" y="1.7" width="16.4" height="30" rx="8.2" fill="#d2d2d2"/><path d="M11.6 22 Q11.6 36.6 24 36.6 Q36.4 36.6 36.4 22" stroke="#d2d2d2" stroke-width="2.8" fill="none" stroke-linecap="round"/><path d="M24 36.6 V44.5 M17.5 44.5 H30.5" stroke="#d2d2d2" stroke-width="3" stroke-linecap="round"/><path d="M1.9 46 L46.3 1.4" stroke="#1b1b1b" stroke-width="7"/><path d="M1.9 46 L46.3 1.4" stroke="#ef6b6b" stroke-width="3.2" stroke-linecap="round"/></svg>
<svg class="a" style="left:147px;top:1592px" width="18" height="12"><use href="#chev"/></svg>
<div class="a nw tb" style="left:0;width:184px">Unmute</div>
<svg class="a" style="left:244px;top:1573px" width="52" height="50" viewBox="0 0 52 50"><rect x="2" y="10" width="34" height="28" rx="6" fill="#adadad"/><path d="M39 19 L47.5 12.6 Q50 11.5 50 14 V34 Q50 36.5 47.5 35.4 L39 29Z" fill="#adadad"/><path d="M3.8 46 L48.2 1.4" stroke="#1b1b1b" stroke-width="7"/><path d="M3.8 46 L48.2 1.4" stroke="#ef6b6b" stroke-width="3.2" stroke-linecap="round"/></svg>
<svg class="a" style="left:325px;top:1592px" width="18" height="12"><use href="#chev"/></svg>
<div class="a nw tb" style="left:178px;width:184px">Start Video</div>
<svg class="a" style="left:540px;top:1579px" width="52" height="38" viewBox="0 0 52 38"><circle cx="17" cy="8" r="8" fill="#adadad"/><path d="M0 31 Q0 19 17 19 Q34 19 34 31 Q34 37 28 37 H6 Q0 37 0 31Z" fill="#adadad"/><circle cx="36" cy="12" r="7" fill="#adadad"/><path d="M31 23 Q36 22 40 22 Q49 23 49 32 Q49 37 44 37 H36 Q37 33 37 30 Q37 26 31 23Z" fill="#adadad"/></svg>
<div class="a nw" style="left:596px;top:1583px;font-size:23.5px;color:#c6c6c6">11</div>
<svg class="a" style="left:643px;top:1592px" width="18" height="12"><use href="#chev"/></svg>
<div class="a nw tb" style="left:474px;width:184px">Participants</div>
<svg class="a" style="left:737px;top:1578px" width="42" height="38" viewBox="0 0 42 38"><path d="M8 1 H33 Q41 1 41 9 V20 Q41 28 33 28 H18 L9 37 V28 H8 Q0 28 0 20 V9 Q0 1 8 1Z" fill="#adadad"/></svg>
<div class="a nw tb" style="left:665px;width:184px">Chat</div>
<div class="a" style="left:908px;top:1579px;width:48px;height:36px;border-radius:6px;background:#63d562"></div>
<svg class="a" style="left:920px;top:1582px" width="24" height="30" viewBox="0 0 24 30"><path d="M12 26 V5 M4 13 L12 5 L20 13" stroke="#111" stroke-width="4" fill="none" stroke-linecap="round" stroke-linejoin="round"/></svg>
<svg class="a" style="left:991px;top:1595px" width="16" height="10" viewBox="0 0 18 12"><path d="M2 10 L9 3 L16 10" stroke="#63d562" stroke-width="3" fill="none"/></svg>
<div class="a nw tb" style="left:840px;width:184px;color:#63d562;font-size:24.4px">Share Screen</div>
<svg class="a" style="left:1100px;top:1578px" width="36" height="38" viewBox="0 0 36 38"><rect x="0" y="19" width="9" height="19" rx="2" fill="#adadad"/><rect x="13.5" y="0" width="9" height="38" rx="2" fill="#adadad"/><rect x="27" y="11" width="9" height="27" rx="2" fill="#adadad"/></svg>
<div class="a nw tb" style="left:1026px;width:184px;font-size:24.8px">Polls/Quizzes</div>
<div class="a" style="left:1305px;top:1577px;width:40px;height:40px;border-radius:5px;background:#adadad"></div>
<div class="a" style="left:1317px;top:1588px;width:5px;height:18px;background:#1b1b1b"></div>
<div class="a" style="left:1328px;top:1588px;width:5px;height:18px;background:#1b1b1b"></div>
<div class="a" style="left:1361px;top:1577px;width:40px;height:40px;border-radius:5px;background:#adadad"></div>
<div class="a" style="left:1373px;top:1589px;width:16px;height:16px;background:#1b1b1b"></div>
<div class="a nw tb" style="left:1203px;width:300px;font-size:24.8px">Pause/Stop Recording</div>
<svg class="a" style="left:1566px;top:1576px" width="36" height="42" viewBox="0 0 36 42"><path d="M3 14 Q3 11 5.5 11 Q8 11 8 14 V4 Q8 1.5 10.5 1.5 Q13 1.5 13 4 V2.5 Q13 0 15.5 0 Q18 0 18 2.5 V4 Q18 1.5 20.5 1.5 Q23 1.5 23 4 V22 L28 16 Q31 13 33.5 15.5 Q35.5 17.5 33 21 L24 35 Q20 41 13 41 Q3 41 3 30Z" fill="#adadad"/><path d="M8 14 V24 M13 5 V23 M18 4 V23" stroke="#1b1b1b" stroke-width="1.6"/></svg>
<div class="a nw tb" style="left:1489px;width:184px">Raise Hand</div>
<svg class="a" style="left:1723px;top:1578px" width="50" height="38" viewBox="0 0 50 38"><path d="M26 0 H45 Q50 0 50 5 V16 Q50 21 45 21 H44 V27 L38 21 H32Z" fill="#adadad"/><path d="M6 9 H26 Q31 9 31 14 V26 Q31 31 26 31 H14 L8 37 V31 H6 Q1 31 1 26 V14 Q1 9 6 9Z" fill="#adadad" stroke="#1b1b1b" stroke-width="2"/></svg>
<div class="a nw tb" style="left:1656px;width:184px">Q&amp;A</div>
<div class="a" style="left:1886px;top:1593px;width:8px;height:8px;border-radius:50%;background:#adadad"></div>
<div class="a" style="left:1902px;top:1593px;width:8px;height:8px;border-radius:50%;background:#adadad"></div>
<div class="a" style="left:1918px;top:1593px;width:8px;height:8px;border-radius:50%;background:#adadad"></div>
<div class="a nw tb" style="left:1818px;width:184px">More</div>
<div class="a" style="left:2088px;top:1587px;width:127px;height:55px;border-radius:14px;background:#aa3330"></div>
<div class="a nw" style="left:2088px;top:1601px;width:127px;text-align:center;font-size:24.4px;font-weight:bold;color:#fff">End</div>

<!-- ===== dock ===== -->
<div class="a" style="left:66px;top:1688px;width:2748px;height:101px;border-radius:26px;background:linear-gradient(90deg,#757372 0%,#6f6c6a 40%,#66625f 70%,#5e5b59 100%);border:1px solid rgba(200,200,200,.35)"></div>
<div class="a" style="left:1839px;top:1702px;width:2px;height:73px;background:#2a2a2a"></div>
<div class="a" style="left:2375px;top:1702px;width:2px;height:73px;background:#2a2a2a"></div>
<!-- Finder -->
<svg class="a di" style="left:82px" viewBox="0 0 64 64"><defs><clipPath id="rr"><rect width="64" height="64" rx="14"/></clipPath><linearGradient id="gfd" x1="0" y1="0" x2="0" y2="1"><stop offset="0" stop-color="#52b4f8"/><stop offset="1" stop-color="#2a6de6"/></linearGradient></defs><g clip-path="url(#rr)"><rect width="64" height="64" fill="#e6ecf3"/><path d="M0 0 H37 Q27 20 28 36 H35 Q34 50 38 64 H0Z" fill="url(#gfd)"/><rect x="15" y="18" width="3" height="7" rx="1.5" fill="#1c2c44"/><rect x="45" y="18" width="3" height="7" rx="1.5" fill="#1c2c44"/><path d="M12 43 Q32 56 52 43" stroke="#1c2c44" stroke-width="2.4" fill="none"/></g></svg>
<!-- Safari -->
<svg class="a di" style="left:164px" viewBox="0 0 64 64"><rect width="64" height="64" rx="14" fill="#f2f2f4"/><circle cx="32" cy="32" r="27" fill="#3b8ff0"/><circle cx="32" cy="32" r="23" fill="none" stroke="#d8e8fb" stroke-width="2.5" stroke-dasharray="1 2"/><path d="M48 16 L35 35 L29 29Z" fill="#f04a3a"/><path d="M16 48 L29 29 L35 35Z" fill="#fff"/></svg>
<!-- Chrome -->
<svg class="a di" style="left:248px" viewBox="0 0 64 64"><rect width="64" height="64" rx="14" fill="#fafafa"/><circle cx="32" cy="32" r="26" fill="#3aa457"/><path d="M32 6 A26 26 0 0 1 54.5 19 H32 A13 13 0 0 0 20.7 25.5 L9.5 19 A26 26 0 0 1 32 6Z" fill="#d94235"/><path d="M54.5 19 A26 26 0 0 1 32 58 L43.3 38.5 A13 13 0 0 0 43.3 25.5Z" fill="#f6c443"/><circle cx="32" cy="32" r="11" fill="#fff"/><circle cx="32" cy="32" r="8.5" fill="#4c82ee"/></svg>
<!-- Messages -->
<svg class="a di" style="left:330px" viewBox="0 0 64 64"><defs><linearGradient id="gm" x1="0" y1="0" x2="0" y2="1"><stop offset="0" stop-color="#7ee86f"/><stop offset="1" stop-color="#3cc04c"/></linearGradient></defs><rect width="64" height="64" rx="14" fill="url(#gm)"/><ellipse cx="32" cy="30" rx="23" ry="18" fill="#f4f9f3"/><path d="M16 42 L14 52 L25 45Z" fill="#f4f9f3"/></svg>
<!-- Mail -->
<svg class="a di" style="left:414px" viewBox="0 0 64 64"><defs><linearGradient id="gml" x1="0" y1="0" x2="0" y2="1"><stop offset="0" stop-color="#2a72ee"/><stop offset="1" stop-color="#5dc2f8"/></linearGradient></defs><rect width="64" height="64" rx="14" fill="url(#gml)"/><rect x="9" y="18" width="46" height="29" rx="3" fill="#f1f1f3"/><path d="M10 19 L32 37 L54 19" stroke="#c9c9cf" stroke-width="1.6" fill="none"/></svg>
<!-- Maps -->
<svg class="a di" style="left:498px" viewBox="0 0 64 64"><defs><clipPath id="rm"><rect width="64" height="64" rx="14"/></clipPath></defs><g clip-path="url(#rm)"><rect width="64" height="64" fill="#eeeae2"/><path d="M28 0 H64 V30 Q45 25 40 0Z" fill="#8ad67a"/><path d="M0 10 L64 60 V64 H40 L0 30Z" fill="#f1d15a"/><path d="M0 40 H12 V64 H0Z" fill="#f2c0c8"/><rect x="15" y="0" width="6" height="40" fill="#3b86ef"/><circle cx="18" cy="38" r="8" fill="#fff"/><circle cx="18" cy="38" r="5.5" fill="#3b86ef"/><path d="M38 42 H60 V54 Q49 64 38 54Z" fill="#2f5db8"/><text x="49" y="53" font-size="9" font-weight="bold" fill="#fff" text-anchor="middle" font-family="Liberation Sans">280</text></g></svg>
<!-- Photos -->
<svg class="a di" style="left:580px" viewBox="0 0 64 64"><rect width="64" height="64" rx="14" fill="#fafafa"/><g transform="translate(32 32)" opacity=".85"><ellipse cx="0" cy="-14" rx="7" ry="12" fill="#f39c2b"/><ellipse cx="0" cy="-14" rx="7" ry="12" fill="#f6c53b" transform="rotate(45)"/><ellipse cx="0" cy="-14" rx="7" ry="12" fill="#8acb4e" transform="rotate(90)"/><ellipse cx="0" cy="-14" rx="7" ry="12" fill="#4fb9a2" transform="rotate(135)"/><ellipse cx="0" cy="-14" rx="7" ry="12" fill="#4b95e0" transform="rotate(180)"/><ellipse cx="0" cy="-14" rx="7" ry="12" fill="#8f6fd0" transform="rotate(225)"/><ellipse cx="0" cy="-14" rx="7" ry="12" fill="#d9558a" transform="rotate(270)"/><ellipse cx="0" cy="-14" rx="7" ry="12" fill="#ea4c3c" transform="rotate(315)"/></g></svg>
<!-- FaceTime -->
<svg class="a di" style="left:664px" viewBox="0 0 64 64"><rect width="64" height="64" rx="14" fill="url(#gm)"/><rect x="10" y="21" width="30" height="23" rx="6" fill="#f4f9f3"/><path d="M42 29 L54 20 V45 L42 36Z" fill="#f4f9f3"/></svg>
<!-- Calendar -->
<svg class="a di" style="left:746px" viewBox="0 0 64 64"><defs><clipPath id="rc"><rect width="64" height="64" rx="14"/></clipPath></defs><g clip-path="url(#rc)"><rect width="64" height="64" fill="#f6f6f6"/><rect width="64" height="20" fill="#ea5a4f"/></g><text x="32" y="15" font-size="11" font-weight="bold" fill="#fff" text-anchor="middle" font-family="Liberation Sans">FEB</text><text x="32" y="56" font-size="34" fill="#2b2b2b" text-anchor="middle" font-family="Liberation Sans">4</text></svg>
<!-- Contacts -->
<svg class="a di" style="left:830px" viewBox="0 0 64 64"><rect x="50" y="8" width="14" height="50" rx="4" fill="#d9d9d9"/><rect x="58" y="20" width="6" height="10" fill="#5ab0f0"/><rect x="58" y="32" width="6" height="10" fill="#f0a030"/><rect x="58" y="44" width="6" height="10" fill="#70c860"/><rect width="62" height="64" rx="14" fill="#b98d4e"/><circle cx="31" cy="32" r="20" fill="none" stroke="#9b7440" stroke-width="1.5"/><circle cx="31" cy="27" r="6" fill="#9b7440"/><path d="M19 45 Q31 33 43 45" fill="#9b7440"/></svg>
<!-- Reminders -->
<svg class="a di" style="left:914px" viewBox="0 0 64 64"><rect width="64" height="64" rx="14" fill="#fcfcfc"/><circle cx="12" cy="16" r="5" fill="#3a7ef2"/><circle cx="12" cy="32" r="5" fill="#e8453c"/><circle cx="12" cy="48" r="5" fill="#f09a2a"/><path d="M24 16 H57 M24 32 H57 M24 48 H57" stroke="#c8c8cc" stroke-width="1.5"/></svg>
<!-- Notes -->
<svg class="a di" style="left:996px" viewBox="0 0 64 64"><defs><clipPath id="rn"><rect width="64" height="64" rx="14"/></clipPath></defs><g clip-path="url(#rn)"><rect width="64" height="64" fill="#efedea"/><rect width="64" height="17" fill="#f6cb45"/><path d="M0 32 H64 M0 48 H64" stroke="#cfcdca" stroke-width="1"/></g></svg>
<!-- Launchpad -->
<svg class="a di" style="left:1080px" viewBox="0 0 64 64"><rect width="64" height="64" rx="14" fill="#d2d2d4"/><rect x="10" y="11" width="12" height="12" rx="3" fill="#5fd14f"/><rect x="26" y="11" width="12" height="12" rx="3" fill="#f6bf37"/><rect x="42" y="11" width="12" height="12" rx="3" fill="#f08a2a"/><rect x="10" y="27" width="12" height="12" rx="3" fill="#d8342b"/><rect x="26" y="27" width="12" height="12" rx="3" fill="#a9aeb3"/><rect x="42" y="27" width="12" height="12" rx="3" fill="#ea4d66"/><rect x="10" y="43" width="12" height="12" rx="3" fill="#9447d6"/><rect x="26" y="43" width="12" height="12" rx="3" fill="#3996f0"/><rect x="42" y="43" width="12" height="12" rx="3" fill="#4fc8a8"/></svg>
<!-- TV -->
<svg class="a di" style="left:1162px" viewBox="0 0 64 64"><rect width="64" height="64" rx="14" fill="#1d2523"/><circle cx="19" cy="34" r="8" fill="#fff"/><path d="M20 24 Q21 19 25 18 Q25 23 20 24Z" fill="#fff"/><text x="41" y="42" font-size="22" font-weight="bold" fill="#fff" text-anchor="middle" font-family="Liberation Sans">tv</text></svg>
<!-- Music -->
<svg class="a di" style="left:1246px" viewBox="0 0 64 64"><rect width="64" height="64" rx="14" fill="#f0485a"/><path d="M24 46 V18 L46 13 V40" stroke="#fff" stroke-width="4" fill="none"/><ellipse cx="19" cy="47" rx="6" ry="5" fill="#fff"/><ellipse cx="41" cy="41" rx="6" ry="5" fill="#fff"/></svg>
<!-- Podcasts -->
<svg class="a di" style="left:1330px" viewBox="0 0 64 64"><defs><linearGradient id="gp" x1="0" y1="0" x2="0" y2="1"><stop offset="0" stop-color="#c36cf0"/><stop offset="1" stop-color="#7a36d6"/></linearGradient></defs><rect width="64" height="64" rx="14" fill="url(#gp)"/><path d="M18 44 A19 19 0 1 1 46 44" stroke="#fff" stroke-width="3" fill="none"/><path d="M24 38 A11 11 0 1 1 40 38" stroke="#fff" stroke-width="3" fill="none"/><circle cx="32" cy="28" r="5" fill="#fff"/><rect x="28" y="35" width="8" height="22" rx="4" fill="#fff"/></svg>
<!-- Keynote -->
<svg class="a di" style="left:1412px" viewBox="0 0 64 64"><rect width="64" height="64" rx="14" fill="#fafcff"/><path d="M0 30 H64 M0 46 H64 M22 18 V64 M42 18 V64" stroke="#dfe8f4" stroke-width="1.5"/><path d="M12 10 H52 L49 27 H15Z" fill="#2f6fdc"/><rect x="17" y="12" width="30" height="12" fill="#f6f6f6"/><circle cx="32" cy="18" r="5" fill="#f2a93a"/><path d="M32 18 V13 A5 5 0 0 1 37 18Z" fill="#e84b5b"/><rect x="30.5" y="27" width="3" height="30" fill="#9aa0a8"/><rect x="22" y="56" width="20" height="3" rx="1.5" fill="#8a9098"/></svg>
<!-- Numbers -->
<svg class="a di" style="left:1496px" viewBox="0 0 64 64"><rect width="64" height="64" rx="14" fill="#f7fbf6"/><path d="M0 12 H64 M0 22 H64 M0 32 H64 M0 42 H64 M0 52 H64 M12 0 V64 M22 0 V64 M32 0 V64 M42 0 V64 M52 0 V64" stroke="#cfe9cf" stroke-width="1"/><rect x="11" y="34" width="9" height="22" fill="#d83a3a"/><rect x="23" y="22" width="9" height="34" fill="#f08f2c"/><rect x="35" y="9" width="9" height="47" fill="#52c652"/><rect x="47" y="16" width="9" height="40" fill="#3a8cf0"/></svg>
<!-- Pages -->
<svg class="a di" style="left:1578px" viewBox="0 0 64 64"><rect width="64" height="64" rx="14" fill="#fdf8f2"/><path d="M0 16 H64 M0 26 H64 M0 36 H64 M0 46 H64 M0 56 H64" stroke="#f4dcc4" stroke-width="1"/><text x="16" y="30" font-size="22" font-weight="bold" fill="#f0a83a" text-anchor="middle" font-family="Liberation Serif">“</text><path d="M50 6 L20 56" stroke="#f0a83a" stroke-width="6" stroke-linecap="round"/><path d="M26 46 L20 56" stroke="#333" stroke-width="5"/></svg>
<!-- App Store -->
<svg class="a di" style="left:1662px" viewBox="0 0 64 64"><defs><linearGradient id="ga" x1="0" y1="0" x2="0" y2="1"><stop offset="0" stop-color="#4fb2f8"/><stop offset="1" stop-color="#1c6ee8"/></linearGradient></defs><rect width="64" height="64" rx="14" fill="url(#ga)"/><path d="M33 12 L18 50 M31 12 L46 50 M13 40 H51" stroke="#fff" stroke-width="4.5" stroke-linecap="round"/></svg>
<!-- System Prefs -->
<svg class="a di" style="left:1746px" viewBox="0 0 64 64"><defs><linearGradient id="gsp" x1="0" y1="0" x2="0" y2="1"><stop offset="0" stop-color="#c9c9cb"/><stop offset="1" stop-color="#9b9b9e"/></linearGradient></defs><rect width="64" height="64" rx="14" fill="url(#gsp)"/><circle cx="32" cy="32" r="25" fill="#505154"/><circle cx="32" cy="32" r="25" fill="none" stroke="#8a8b8e" stroke-width="3" stroke-dasharray="1.6 1.6"/><circle cx="32" cy="32" r="20" fill="#78797c"/><circle cx="32" cy="32" r="15" fill="#5c5d60"/><circle cx="32" cy="32" r="12" fill="#87888b"/><path d="M32 32 V19 M32 32 L20.7 38.5 M32 32 L43.3 38.5" stroke="#4a4b4e" stroke-width="4"/><circle cx="32" cy="32" r="3.5" fill="#4a4b4e"/></svg>
<div class="a" style="left:1790px;top:1696px;width:30px;height:30px;border-radius:50%;background:#e24b3f;color:#fff;font-size:19px;line-height:30px;text-align:center">1</div>
<!-- Excel -->
<svg class="a di" style="left:1866px" viewBox="0 0 64 64"><rect width="64" height="64" rx="14" fill="#fbfbfb"/><rect x="18" y="10" width="38" height="44" rx="3" fill="#21a366"/><rect x="18" y="10" width="38" height="11" fill="#33c481"/><rect x="18" y="32" width="38" height="11" fill="#107c41"/><rect x="8" y="21" width="24" height="24" rx="3" fill="#185c37"/><text x="20" y="40" font-size="17" font-weight="bold" fill="#fff" text-anchor="middle" font-family="Liberation Sans">X</text></svg>
<!-- PDF Expert -->
<svg class="a di" style="left:1950px" viewBox="0 0 64 64"><defs><clipPath id="rp"><rect width="64" height="64" rx="14"/></clipPath></defs><g clip-path="url(#rp)"><rect width="64" height="64" fill="#e53d3d"/><path d="M0 10 Q25 10 40 32 Q25 54 0 54Z" fill="#fbe9e9"/><circle cx="6" cy="32" r="10" fill="none" stroke="#d83535" stroke-width="5"/></g><text x="49" y="54" font-size="11" font-weight="bold" fill="#fff" text-anchor="middle" font-family="Liberation Sans">PDF</text></svg>
<!-- Word -->
<svg class="a di" style="left:2032px" viewBox="0 0 64 64"><rect width="64" height="64" rx="14" fill="#fbfbfb"/><rect x="18" y="10" width="38" height="44" rx="3" fill="#2b7cd3"/><rect x="18" y="10" width="38" height="11" fill="#41a5ee"/><rect x="18" y="32" width="38" height="11" fill="#185abd"/><rect x="18" y="43" width="38" height="11" fill="#103f91"/><rect x="6" y="21" width="24" height="24" rx="3" fill="#185abd"/><text x="18" y="40" font-size="16" font-weight="bold" fill="#fff" text-anchor="middle" font-family="Liberation Sans">W</text></svg>
<!-- Zoom -->
<svg class="a" style="left:2113px;top:1701px" width="70" height="70" viewBox="0 0 70 70"><defs><linearGradient id="gz" x1="0" y1="0" x2="0" y2="1"><stop offset="0" stop-color="#5a95f8"/><stop offset="1" stop-color="#3d74ec"/></linearGradient></defs><rect width="70" height="70" rx="24" fill="url(#gz)"/><rect x="14" y="23" width="29" height="24" rx="5" fill="#fff"/><path d="M45 31 L57 23 V47 L45 39Z" fill="#fff"/></svg>
<!-- PowerPoint -->
<svg class="a di" style="left:2198px" viewBox="0 0 64 64"><rect width="64" height="64" rx="14" fill="#fbfbfb"/><circle cx="38" cy="32" r="22" fill="#c43e1c"/><path d="M38 10 A22 22 0 0 1 60 32 H38Z" fill="#ed6c47"/><path d="M38 32 H60 A22 22 0 0 1 38 54Z" fill="#d35230"/><rect x="8" y="20" width="24" height="24" rx="3" fill="#c43e1c"/><text x="20" y="39" font-size="16" font-weight="bold" fill="#fff" text-anchor="middle" font-family="Liberation Sans">P</text></svg>
<!-- Preview -->
<svg class="a di" style="left:2282px" viewBox="0 0 64 64"><defs><linearGradient id="gpv" x1="0" y1="0" x2="0" y2="1"><stop offset="0" stop-color="#8fb3ea"/><stop offset="1" stop-color="#c4d6f2"/></linearGradient></defs><rect width="64" height="64" rx="13" fill="#f1f1f2"/><rect x="5" y="5" width="54" height="54" rx="9" fill="url(#gpv)"/><path d="M5 36 H59 V50 Q59 59 50 59 H14 Q5 59 5 50Z" fill="#2f5f8f"/><path d="M5 46 Q12 40 20 46 Q26 50 30 59 H14 Q5 59 5 50Z" fill="#5b5a55"/><path d="M10 42 Q18 38 24 44" stroke="#e8eef5" stroke-width="2" fill="none"/><path d="M31 43 H60 L58 62 Q57 64 55 64 H36 Q34 64 33 62Z" fill="#d9dde1" opacity=".95"/><path d="M38 50 Q45 46 52 52" stroke="#7d8a99" stroke-width="2" fill="none"/><rect x="32" y="31" width="28" height="12" rx="5" fill="#151515"/><rect x="34" y="33" width="24" height="3" rx="1.5" fill="#444"/></svg>
<!-- ? -->
<svg class="a" style="left:2414px;top:1704px" width="40" height="64" viewBox="0 0 40 64"><path d="M4 16 Q4 3 20 3 Q36 3 36 17 Q36 25 27 30 Q20 34 20 43" stroke="#b8b8b8" stroke-width="5" fill="none"/><rect x="17" y="53" width="6" height="6" fill="#b8b8b8"/></svg>
<!-- thumbs -->
<div class="a" style="left:2480px;top:1715px;width:76px;height:42px;background:#f3f3f3;border-top:3px solid #222"></div>
<div class="a" style="left:2484px;top:1720px;width:48px;height:36px;background:repeating-linear-gradient(#fff 0 2px,#bbb 2px 3px)"></div>
<svg class="a" style="left:2530px;top:1748px" width="24" height="24" viewBox="0 0 64 64"><rect width="64" height="64" rx="14" fill="#e53d3d"/><path d="M0 10 Q25 10 40 32 Q25 54 0 54Z" fill="#fbe9e9"/></svg>
<div class="a" style="left:2564px;top:1718px;width:76px;height:36px;background:#fafafa;border-top:2px solid #ddd"></div>
<div class="a" style="left:2580px;top:1735px;width:8px;height:6px;background:#5aa8f0"></div>
<div class="a" style="left:2590px;top:1735px;width:8px;height:6px;background:#5aa8f0"></div>
<div class="a" style="left:2600px;top:1735px;width:8px;height:6px;background:#5aa8f0"></div>
<svg class="a" style="left:2614px;top:1748px" width="24" height="24" viewBox="0 0 64 64"><rect width="64" height="64" rx="14" fill="#e6ecf3"/><path d="M0 0 H37 Q27 20 28 36 H35 Q34 50 38 64 H0Z" fill="#2c8ef2"/></svg>
<div class="a" style="left:2653px;top:1698px;width:62px;height:76px;background:#fff"></div>
<div class="a" style="left:2688px;top:1705px;width:23px;height:4px;background:#3a78e8"></div>
<div class="a" style="left:2658px;top:1712px;width:5px;height:5px;border-radius:50%;background:#e9ad3f"></div>
<div class="a" style="left:2658px;top:1720px;width:5px;height:5px;border-radius:50%;background:#9a5db4"></div>
<div class="a" style="left:2658px;top:1728px;width:5px;height:5px;border-radius:50%;background:#cf6e29"></div>
<div class="a" style="left:2658px;top:1736px;width:5px;height:5px;border-radius:50%;background:#52aa94"></div>
<div class="a" style="left:2658px;top:1744px;width:5px;height:5px;border-radius:50%;background:#bf5541"></div>
<svg class="a" style="left:2695px;top:1746px" width="26" height="27" viewBox="0 0 70 70"><rect width="70" height="70" rx="24" fill="#3d80f2"/><rect x="14" y="23" width="29" height="24" rx="5" fill="#fff"/><path d="M45 31 L57 23 V47 L45 39Z" fill="#fff"/></svg>
<!-- Trash -->
<svg class="a" style="left:2739px;top:1697px" width="58" height="76" viewBox="0 0 58 76"><path d="M2 14 H56 L51 68 Q50 75 42 75 H16 Q8 75 7 68Z" fill="#e2e2e3"/><path d="M2 14 Q29 20 56 14" stroke="#bdbdbf" stroke-width="1.5" fill="none"/><path d="M4 15 L12 7 L20 10 L30 3 L40 8 L46 5 L55 13 L50 22 H8Z" fill="#d8dadd"/><path d="M14 12 L26 18 L18 22Z" fill="#3a6fd0"/><path d="M34 8 L44 16 L36 21Z" fill="#c85a3a"/><path d="M24 12 L32 22 L26 23Z" fill="#444"/></svg>
<!-- dots -->
<div class="a dot" style="left:110px"></div>
<div class="a dot" style="left:276px"></div>
<div class="a dot" style="left:1894px"></div>
<div class="a dot" style="left:1978px"></div>
<div class="a dot" style="left:2060px"></div>
<div class="a dot" style="left:2144px"></div>
<div class="a dot" style="left:2226px"></div>
<div class="a dot" style="left:2310px"></div>

</body></html>
